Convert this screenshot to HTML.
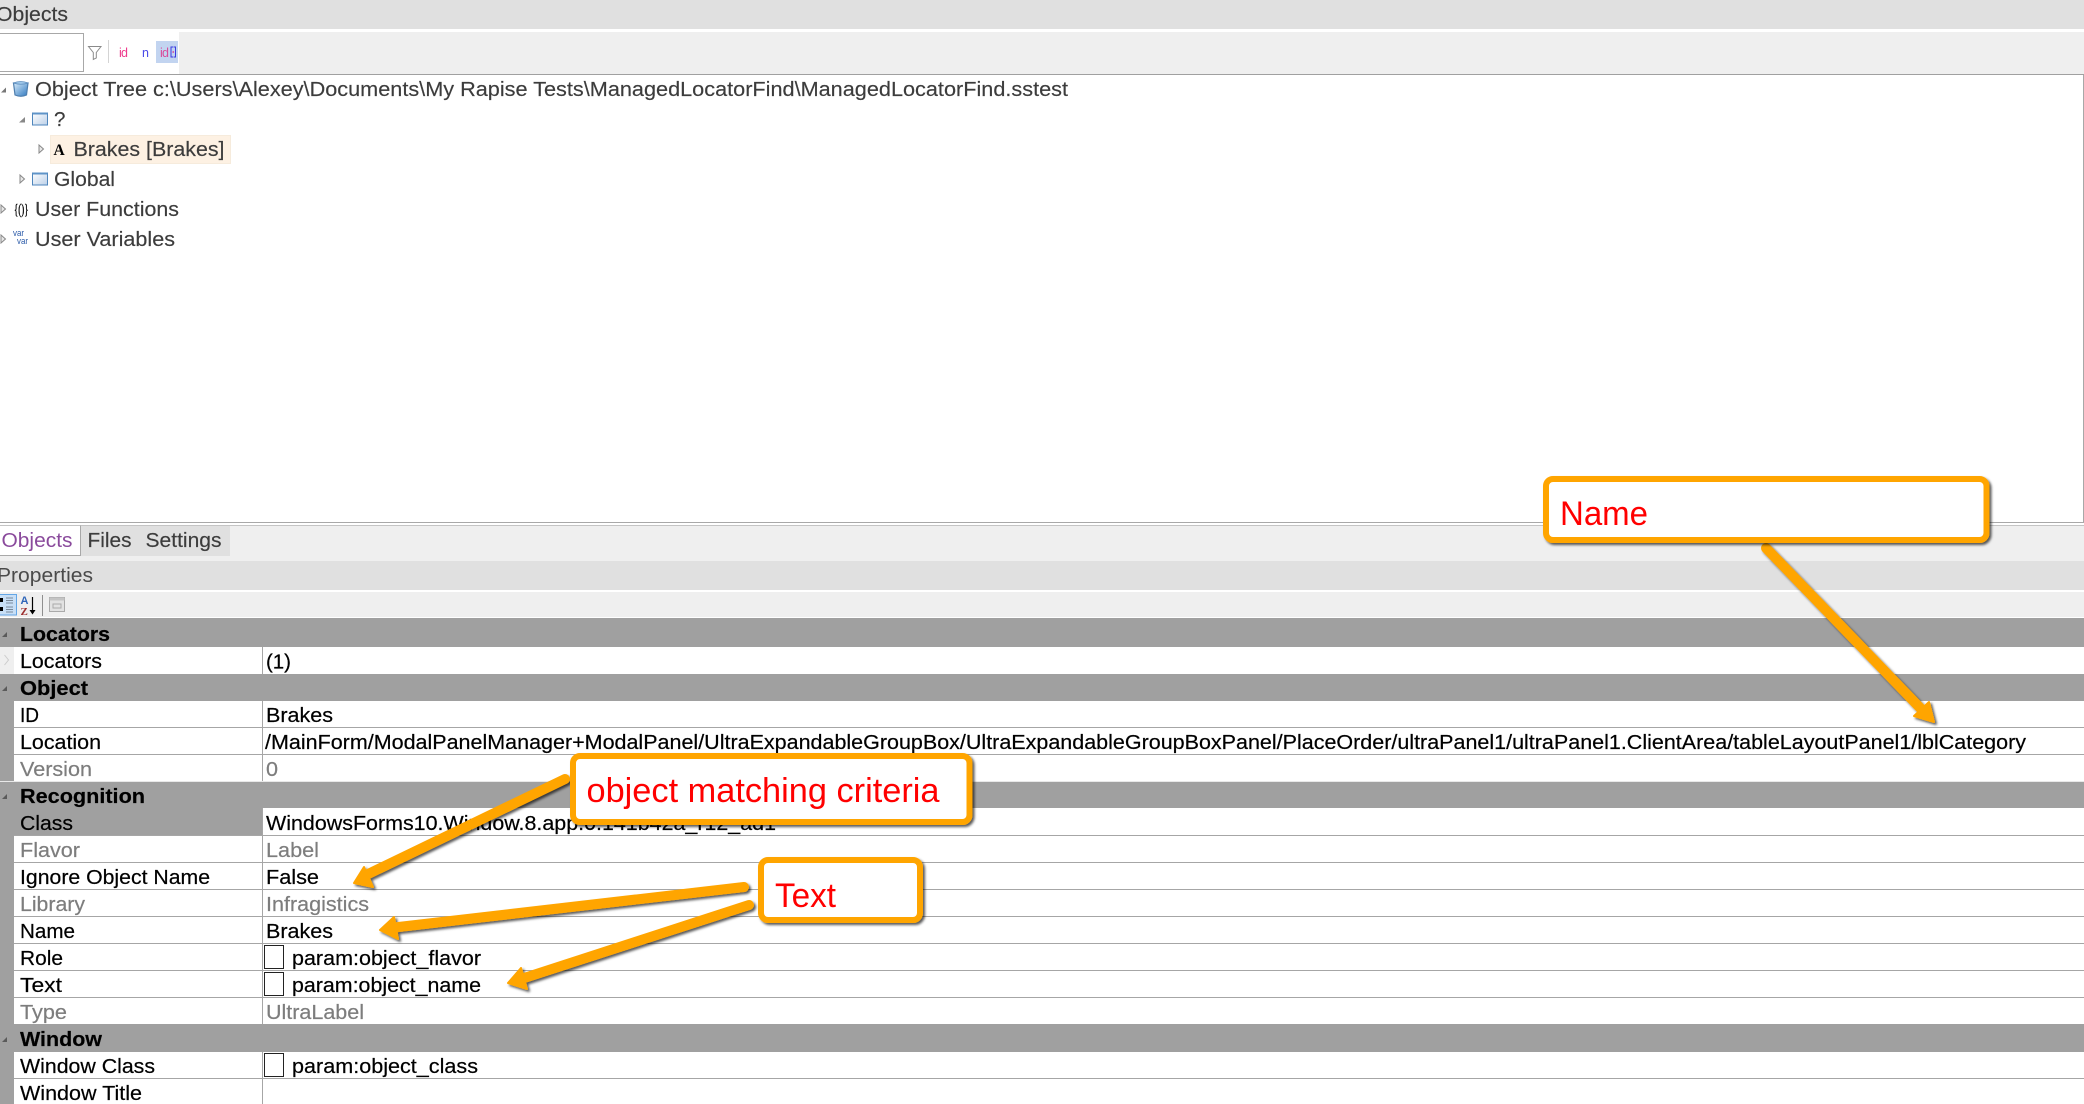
<!DOCTYPE html>
<html><head><meta charset="utf-8"><title>Objects</title>
<style>
html,body{margin:0;padding:0;background:#fff;width:2084px;height:1104px;overflow:hidden}
svg{display:block}
text{font-family:"Liberation Sans",Arial,sans-serif;font-size:20.5px;fill:#000;white-space:pre}
.t{fill:#3c3c3c;stroke:#3c3c3c;stroke-width:.15}
.g{fill:#7d7d7d}
.h{font-weight:bold;fill:#000}
.c{fill:#ff0000;font-size:34px}
.grid text{stroke:#000;stroke-width:.2}
.grid text.g{stroke:#7d7d7d}
</style></head><body>
<svg xmlns="http://www.w3.org/2000/svg" width="2084" height="1104" viewBox="0 0 2084 1104">
<defs>
<filter id="sh" x="-20%" y="-20%" width="140%" height="140%"><feDropShadow dx="2" dy="2" stdDeviation="1.3" flood-color="#000" flood-opacity=".65"/></filter>
<linearGradient id="cup" x1="0" x2="1" y1="0" y2="1"><stop offset="0" stop-color="#d8ecfa"/><stop offset="1" stop-color="#2f78c0"/></linearGradient>
<linearGradient id="win" x1="0" x2="1" y1="0" y2="1"><stop offset="0" stop-color="#fff"/><stop offset="1" stop-color="#bcd0e8"/></linearGradient>
</defs>
<rect width="2084" height="1104" fill="#fff"/>
<!-- top title -->
<rect x="0" y="0" width="2084" height="29" fill="#e0e0e0"/>
<text x="-4" y="21" class="t" textLength="72" lengthAdjust="spacingAndGlyphs">Objects</text>
<!-- toolbar -->
<rect x="0" y="32" width="2084" height="42" fill="#efefef"/>
<rect x="0" y="32" width="179" height="42" fill="#fff"/>
<rect x="-2" y="33.500" width="85.500" height="38" fill="#fff" stroke="#a8a8a8" stroke-width="1"/>
<path d="M88.500 46.500h12.500l-4.700 6v5.500l-3 1.500v-7z" fill="none" stroke="#8a8a8a" stroke-width="1"/>
<rect x="108" y="40" width="1" height="23" fill="#d4d4d4"/>
<text x="119" y="57" style="font-size:12.500px;fill:#ee3a8c" textLength="9">id</text>
<text x="142" y="57" style="font-size:12.500px;fill:#4a4ae8" textLength="6">n</text>
<rect x="156" y="41" width="22" height="22" fill="#c2d4f0"/>
<text x="160" y="57" style="font-size:12.500px;fill:#d94a9a" textLength="9">id</text>
<path d="M173 47h-2v10h2M173.500 47h2v10h-2" fill="none" stroke="#3a3ae0" stroke-width="1"/>
<rect x="172.600" y="51" width="1.200" height="2" fill="#d94a9a"/>
<rect x="0" y="74" width="2084" height="1" fill="#a0a0a0"/>
<!-- tree -->
<rect x="50.500" y="135.500" width="180" height="28" fill="#fdf1e3" stroke="#f6ebdc"/>
<path d="M1 92.500l5-5v5z" fill="#777"/>
<path d="M19 122.500l6-5.500v5.500z" fill="#888"/>
<path d="M39 145l4.500 4-4.500 4z" fill="#e8e8e8" stroke="#888"/>
<path d="M20 175l4.500 4-4.500 4z" fill="#e8e8e8" stroke="#888"/>
<path d="M1 205l4.500 4-4.500 4z" fill="#e8e8e8" stroke="#888"/>
<path d="M1 235l4.500 4-4.500 4z" fill="#e8e8e8" stroke="#888"/>
<path d="M13.500 83h14.500l-1.500 12q-5.500 2.500-11.500 0z" fill="url(#cup)" stroke="#4f7faf" stroke-width="1.200"/>
<path d="M13.500 83q7.200-3 14.500 0q-7.200 2.500-14.500 0z" fill="#9fc8ea" stroke="#5f8fbf" stroke-width=".8"/>
<rect x="32.500" y="113" width="15" height="12" fill="url(#win)" stroke="#4f86bc"/>
<rect x="32.500" y="112.500" width="15" height="2" fill="#5f94c8"/>
<rect x="32.500" y="173" width="15" height="12" fill="url(#win)" stroke="#4f86bc"/>
<rect x="32.500" y="172.500" width="15" height="2" fill="#5f94c8"/>
<text x="53.500" y="155" style="font-family:'Liberation Serif',serif;font-weight:bold;font-size:15.500px" textLength="12">A</text>
<text x="14" y="214" style="font-family:'Liberation Serif',serif;font-size:15px;stroke:#000;stroke-width:.4" textLength="14.500" lengthAdjust="spacingAndGlyphs">{()}</text>
<text x="13" y="236" style="font-size:9.500px;fill:#2a5aa8" textLength="11" lengthAdjust="spacingAndGlyphs">var</text>
<text x="17" y="244" style="font-size:9.500px;fill:#2a5aa8" textLength="11" lengthAdjust="spacingAndGlyphs">var</text>
<text x="35" y="96" class="t" textLength="1033" lengthAdjust="spacingAndGlyphs">Object Tree c:\Users\Alexey\Documents\My Rapise Tests\ManagedLocatorFind\ManagedLocatorFind.sstest</text>
<text x="54" y="126" class="t">?</text>
<text x="73.500" y="156" class="t" textLength="151" lengthAdjust="spacingAndGlyphs">Brakes [Brakes]</text>
<text x="54" y="186" class="t" textLength="61" lengthAdjust="spacingAndGlyphs">Global</text>
<text x="35" y="216" class="t" textLength="144" lengthAdjust="spacingAndGlyphs">User Functions</text>
<text x="35" y="246" class="t" textLength="140" lengthAdjust="spacingAndGlyphs">User Variables</text>
<rect x="2083" y="75" width="1" height="448" fill="#a8a8a8"/>
<rect x="0" y="522" width="2084" height="1" fill="#a8a8a8"/>
<rect x="0" y="525" width="2084" height="1" fill="#c4c4c4"/>
<!-- tabs -->
<rect x="0" y="526" width="2084" height="35" fill="#efefef"/>
<rect x="0" y="526" width="80" height="29" fill="#fff"/>
<path d="M80.500 525.500v30H0" fill="none" stroke="#a8a8a8"/>
<rect x="81" y="526" width="149" height="30" fill="#e0e0e0"/>
<text x="1.500" y="547" style="fill:#8a4a9c" textLength="71" lengthAdjust="spacingAndGlyphs">Objects</text>
<text x="87.500" y="547" class="t" textLength="44" lengthAdjust="spacingAndGlyphs">Files</text>
<text x="145.500" y="547" class="t" textLength="76" lengthAdjust="spacingAndGlyphs">Settings</text>
<!-- properties -->
<rect x="0" y="561" width="2084" height="29" fill="#e0e0e0"/>
<text x="-3" y="582" style="fill:#4a4a4a" textLength="96" lengthAdjust="spacingAndGlyphs">Properties</text>
<rect x="0" y="592" width="2084" height="25" fill="#efefef"/>
<rect x="-1" y="594.500" width="17.500" height="20.500" fill="#c8dff6" stroke="#64a6e6"/>
<path d="M0 600h3M0 609h3" stroke="#000" stroke-width="4"/>
<path d="M6 598h7M6 600.500h7M6 603h7M6 607h7M6 609.500h7M6 612h7" stroke="#7a8a9a" stroke-width="1"/>
<text x="20.500" y="604" style="font-size:11px;font-weight:bold;fill:#2f66b8">A</text>
<text x="20.500" y="615" style="font-size:11px;font-weight:bold;fill:#9c2f2f;font-family:'Liberation Serif',serif">Z</text>
<path d="M32.500 597v15" stroke="#000" stroke-width="1.200"/>
<path d="M29.500 610h6l-3 4.500z" fill="#000"/>
<rect x="42" y="595" width="1" height="21" fill="#8f8f8f"/>
<rect x="49.500" y="597.500" width="15" height="14" fill="#e2e2e2" stroke="#aaa"/>
<rect x="49.500" y="597.500" width="15" height="3" fill="#c4c4c4"/>
<path d="M53 604h8v4h-8z" fill="none" stroke="#aaa"/>
<!-- grid backgrounds -->
<rect x="0" y="617" width="2084" height="487" fill="#fff"/>
<rect x="0" y="618" width="14" height="486" fill="#a0a0a0"/>
<rect x="0" y="618" width="2084" height="29" fill="#a0a0a0"/>
<rect x="0" y="647" width="14" height="27" fill="#efefef"/>
<path d="M4.500 655l4 5-4 5" fill="none" stroke="#ccc"/>
<rect x="0" y="674" width="2084" height="27" fill="#a0a0a0"/>
<rect x="0" y="782" width="2084" height="26" fill="#a0a0a0"/>
<rect x="0" y="808" width="262" height="28" fill="#a0a0a0"/>
<rect x="0" y="1024" width="2084" height="28" fill="#a0a0a0"/>
<!-- row lines -->
<g fill="#a6a6a6">
<rect x="14" y="727" width="2070" height="1"/>
<rect x="14" y="754" width="2070" height="1"/>
<rect x="14" y="862" width="2070" height="1"/>
<rect x="14" y="889" width="2070" height="1"/>
<rect x="14" y="916" width="2070" height="1"/>
<rect x="14" y="943" width="2070" height="1"/>
<rect x="14" y="970" width="2070" height="1"/>
<rect x="14" y="997" width="2070" height="1"/>
<rect x="14" y="835" width="2070" height="1"/>
<rect x="14" y="1078" width="2070" height="1"/>
<rect x="262" y="647" width="1" height="27"/>
<rect x="262" y="701" width="1" height="81"/>
<rect x="262" y="808" width="1" height="216"/>
<rect x="262" y="1052" width="1" height="52"/>
</g>
<rect x="0" y="781" width="2084" height="1" fill="#e8e8e8"/>
<!-- group arrows -->
<g fill="#5a5a5a">
<path d="M2 637l5-5v5z"/><path d="M2 691l5-5v5z"/><path d="M2 799l5-5v5z"/><path d="M2 1042l5-5v5z"/>
</g>
<g class="grid">
<!-- headers -->
<text x="20" y="641" class="h" textLength="90" lengthAdjust="spacingAndGlyphs">Locators</text>
<text x="20" y="695" class="h" textLength="68" lengthAdjust="spacingAndGlyphs">Object</text>
<text x="20" y="803" class="h" textLength="125" lengthAdjust="spacingAndGlyphs">Recognition</text>
<text x="20" y="1046" class="h" textLength="82" lengthAdjust="spacingAndGlyphs">Window</text>
<!-- labels -->
<text x="20" y="668" textLength="82" lengthAdjust="spacingAndGlyphs">Locators</text>
<text x="20" y="722" textLength="19" lengthAdjust="spacingAndGlyphs">ID</text>
<text x="20" y="749" textLength="81" lengthAdjust="spacingAndGlyphs">Location</text>
<text x="20" y="776" class="g" textLength="72" lengthAdjust="spacingAndGlyphs">Version</text>
<text x="20" y="830" textLength="53" lengthAdjust="spacingAndGlyphs">Class</text>
<text x="20" y="857" class="g" textLength="60" lengthAdjust="spacingAndGlyphs">Flavor</text>
<text x="20" y="884" textLength="190" lengthAdjust="spacingAndGlyphs">Ignore Object Name</text>
<text x="20" y="911" class="g" textLength="65" lengthAdjust="spacingAndGlyphs">Library</text>
<text x="20" y="938" textLength="55" lengthAdjust="spacingAndGlyphs">Name</text>
<text x="20" y="965" textLength="43" lengthAdjust="spacingAndGlyphs">Role</text>
<text x="20" y="992" textLength="42" lengthAdjust="spacingAndGlyphs">Text</text>
<text x="20" y="1019" class="g" textLength="47" lengthAdjust="spacingAndGlyphs">Type</text>
<text x="20" y="1073" textLength="135" lengthAdjust="spacingAndGlyphs">Window Class</text>
<text x="20" y="1100" textLength="122" lengthAdjust="spacingAndGlyphs">Window Title</text>
<!-- values -->
<text x="266" y="668.500" textLength="25" lengthAdjust="spacingAndGlyphs">(1)</text>
<text x="266" y="722" textLength="67" lengthAdjust="spacingAndGlyphs">Brakes</text>
<text x="265" y="749" textLength="1761" lengthAdjust="spacingAndGlyphs">/MainForm/ModalPanelManager+ModalPanel/UltraExpandableGroupBox/UltraExpandableGroupBoxPanel/PlaceOrder/ultraPanel1/ultraPanel1.ClientArea/tableLayoutPanel1/lblCategory</text>
<text x="266" y="776" class="g" textLength="12" lengthAdjust="spacingAndGlyphs">0</text>
<text x="266" y="830" textLength="510" lengthAdjust="spacingAndGlyphs">WindowsForms10.Window.8.app.0.141b42a_r12_ad1</text>
<text x="266" y="857" class="g" textLength="53" lengthAdjust="spacingAndGlyphs">Label</text>
<text x="266" y="884" textLength="53" lengthAdjust="spacingAndGlyphs">False</text>
<text x="266" y="911" class="g" textLength="103" lengthAdjust="spacingAndGlyphs">Infragistics</text>
<text x="266" y="938" textLength="67" lengthAdjust="spacingAndGlyphs">Brakes</text>
<text x="292" y="965" textLength="189" lengthAdjust="spacingAndGlyphs">param:object_flavor</text>
<text x="292" y="992" textLength="189" lengthAdjust="spacingAndGlyphs">param:object_name</text>
<text x="266" y="1019" class="g" textLength="98" lengthAdjust="spacingAndGlyphs">UltraLabel</text>
<text x="292" y="1073" textLength="186" lengthAdjust="spacingAndGlyphs">param:object_class</text>
</g>
<rect x="264.500" y="945.500" width="19" height="23" fill="#fff" stroke="#222"/>
<rect x="264.500" y="972.500" width="19" height="23" fill="#fff" stroke="#222"/>
<rect x="264.500" y="1053.500" width="19" height="23" fill="#fff" stroke="#222"/>
<!-- arrows -->
<g fill="#ffa500" stroke="#ffa500" stroke-linejoin="round" filter="url(#sh)">
<path d="M1766 548L1926 714" stroke-width="10" stroke-linecap="round" fill="none"/>
<path d="M1934 722L1914 716L1929 702z" stroke-width="2"/>
</g>
<g fill="#ffa500" stroke="#ffa500" stroke-linejoin="round" filter="url(#sh)">
<path d="M565 779L364 876" stroke-width="10" stroke-linecap="round" fill="none"/>
<path d="M354 883L373 887L364 867z" stroke-width="2"/>
</g>
<g fill="#ffa500" stroke="#ffa500" stroke-linejoin="round" filter="url(#sh)">
<path d="M744 887L390 928" stroke-width="10" stroke-linecap="round" fill="none"/>
<path d="M380 930L398 939L394 917z" stroke-width="2"/>
</g>
<g fill="#ffa500" stroke="#ffa500" stroke-linejoin="round" filter="url(#sh)">
<path d="M749 905L518 980" stroke-width="10" stroke-linecap="round" fill="none"/>
<path d="M508 983L527 989L521 968z" stroke-width="2"/>
</g>
<!-- callouts -->
<rect x="1546" y="479" width="440.500" height="61" rx="7" fill="#fff" stroke="#ffa500" stroke-width="6" filter="url(#sh)"/>
<text x="1560" y="525" class="c" textLength="88" lengthAdjust="spacingAndGlyphs">Name</text>
<rect x="573" y="756" width="396.500" height="66" rx="7" fill="#fff" stroke="#ffa500" stroke-width="6" filter="url(#sh)"/>
<text x="586.500" y="802" class="c" textLength="353" lengthAdjust="spacingAndGlyphs">object matching criteria</text>
<rect x="761" y="860" width="159" height="60" rx="7" fill="#fff" stroke="#ffa500" stroke-width="6" filter="url(#sh)"/>
<text x="775" y="907" class="c" textLength="61" lengthAdjust="spacingAndGlyphs">Text</text>
</svg>
</body></html>
